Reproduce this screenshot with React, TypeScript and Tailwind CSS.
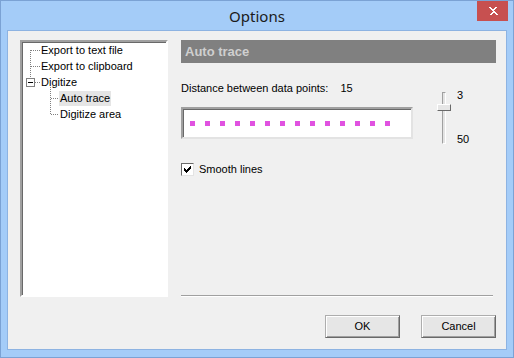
import React from "react";

const font = { fontFamily: '"Liberation Sans", Arial, sans-serif' };

function TreeLines() {
  return (
    <svg className="absolute left-0 top-0" width="140" height="90" shapeRendering="crispEdges">
      <g stroke="#808080" strokeWidth="1" strokeDasharray="1 1" fill="none">
        <line x1="8.5" y1="8" x2="8.5" y2="36" />
        <line x1="9" y1="8.5" x2="18" y2="8.5" />
        <line x1="9" y1="24.5" x2="18" y2="24.5" />
        <line x1="13" y1="40.5" x2="18" y2="40.5" />
        <line x1="28.5" y1="45" x2="28.5" y2="72" />
        <line x1="29" y1="56.5" x2="37" y2="56.5" />
        <line x1="29" y1="72.5" x2="37" y2="72.5" />
      </g>
      <rect x="4.5" y="36.5" width="8" height="8" fill="#fff" stroke="#808080" />
      <line x1="6" y1="40.5" x2="11" y2="40.5" stroke="#000" />
    </svg>
  );
}

function Row({ indent, children, selected }: { indent: number; children: React.ReactNode; selected?: boolean }) {
  return (
    <div className="h-[16px] flex items-center" style={{ paddingLeft: indent }}>
      <span className={`px-[1px] leading-[15px] text-[11px] text-black ${selected ? "bg-[#e5e5e5]" : ""}`}>{children}</span>
    </div>
  );
}

export default function App() {
  return (
    <div className="w-[514px] h-[358px] bg-[#a4ccf8] border border-[#7ba2d4] flex flex-col" style={font}>
      {/* Title bar */}
      <div className="h-[29px] relative flex items-center justify-center shrink-0">
        <span className="text-[15px] text-[#1b1b1b] mt-[1px]" style={{ fontFamily: '"Noto Sans", "Open Sans", sans-serif' }}>
          Options
        </span>
        <div className="absolute right-[5px] top-0 w-[31px] h-[20px] bg-[#c75050] flex items-center justify-center">
          <svg width="10" height="9" viewBox="0 0 10 9" shapeRendering="crispEdges">
            <path d="M1 0h2v1h1v1h2v-1h1v-1h2v1h-1v1h-1v1h-1v1h1v1h1v1h1v1h1v1h-2v-1h-1v-1h-2v1h-1v1h-2v-1h1v-1h1v-1h1v-1h-1v-1h-1v-1h-1z" fill="#fff" />
          </svg>
        </div>
      </div>
      {/* Client area */}
      <div className="mx-[6px] mb-[7px] flex-1 border border-[#8db3e2] bg-[#f0f0f0] flex flex-col">
        <div className="flex pt-[9px] pl-[12px]">
          {/* Tree */}
          <div className="w-[148px] h-[257px] bg-white border-2 border-t-[#a0a0a0] border-l-[#a0a0a0] border-b-[#fff] border-r-[#fff] shadow-[inset_1px_1px_0_#696969]">
            <div className="relative">
              <TreeLines />
              <Row indent={18}>Export to text file</Row>
              <Row indent={18}>Export to clipboard</Row>
              <Row indent={18}>Digitize</Row>
              <Row indent={37} selected>Auto trace</Row>
              <Row indent={37}>Digitize area</Row>
            </div>
          </div>
          {/* Right panel */}
          <div className="ml-[13px] w-[315px] h-[257px] flex flex-col">
            <div className="h-[23px] bg-[#808080] flex items-center pl-[4px]">
              <span className="text-[13px] font-bold text-[#cfcfcf]">Auto trace</span>
            </div>
            <div className="flex">
              <div className="flex flex-col">
                <div className="mt-[19px] h-[13px] flex items-center text-[11px] text-black">
                  <span>Distance between data points:</span>
                  <span className="ml-[12px]">15</span>
                </div>
                <div className="mt-[12px] w-[232px] h-[32px] bg-white border-2 border-t-[#a0a0a0] border-l-[#a0a0a0] border-b-[#e3e3e3] border-r-[#e3e3e3] shadow-[inset_1px_1px_0_#696969] flex items-center pl-[7px] gap-[10px]">
                  {Array.from({ length: 14 }).map((_, i) => (
                    <span key={i} className="w-[5px] h-[5px] bg-[#e052e0] shrink-0" />
                  ))}
                </div>
              </div>
              <div className="ml-[24px] mt-[29px] w-[14px] h-[52px] relative flex justify-center">
                <div className="w-[4px] h-[52px] border border-t-[#a0a0a0] border-l-[#a0a0a0] border-b-[#fff] border-r-[#fff] bg-[#e3e3e3]" />
                <div className="absolute left-0 top-[12px] w-[14px] h-[7px] bg-[#e6e6e6] border border-t-[#fff] border-l-[#fff] border-b-[#696969] border-r-[#696969]" />
              </div>
              <div className="ml-[6px] mt-[24px] h-[60px] flex flex-col justify-between text-[11px] text-black">
                <span>3</span>
                <span>50</span>
              </div>
            </div>
            <div className="mt-[14px] flex items-center">
              <span className="w-[13px] h-[13px] bg-white border border-t-[#696969] border-l-[#696969] border-b-[#e3e3e3] border-r-[#e3e3e3] flex items-center justify-center">
                <svg width="9" height="9" viewBox="0 0 9 9" shapeRendering="crispEdges">
                  <path d="M1 3v3l2 2l5 -5v-3l-5 5z" fill="#000" />
                </svg>
              </span>
              <span className="ml-[5px] text-[11px] text-black">Smooth lines</span>
            </div>
            <div className="flex-1" />
            <div className="w-[312px] h-[2px] border-t border-t-[#a0a0a0] border-b border-b-[#fff]" />
          </div>
        </div>
        <div className="flex justify-end gap-[21px] pr-[10px] mt-[18px]">
          {["OK", "Cancel"].map((t) => (
            <button
              key={t}
              className="w-[75px] h-[23px] bg-[#e6e6e6] border border-t-[#adadad] border-l-[#adadad] border-b-[#696969] border-r-[#696969] shadow-[inset_1px_1px_0_#fff,inset_-1px_-1px_0_#a0a0a0] text-[11px] text-black flex items-center justify-center"
            >
              {t}
            </button>
          ))}
        </div>
      </div>
    </div>
  );
}
